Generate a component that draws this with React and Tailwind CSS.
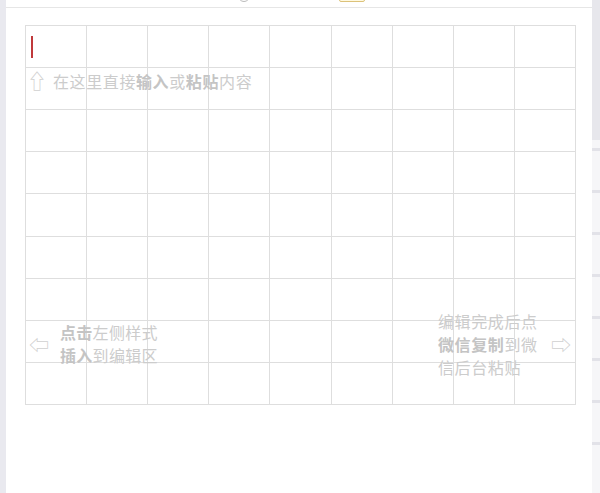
import React from 'react';

const font = { fontFamily: '"Noto Sans CJK SC", "Noto Sans", sans-serif' };

const Cell = () => <div className="border-r border-b border-[#dedede]" />;

const RightMarks = () => (
    <div className="flex flex-col">
        <div className="h-[140px] bg-[#e7e7ec]" />
        {[0, 1, 2, 3, 4, 5, 6, 7].map((i) => (
            <div key={i} className="h-[42px] flex flex-col justify-start pt-[8px]">
                <div className="h-[3px] bg-[#e2e2e8]" />
            </div>
        ))}
    </div>
);

const App = () => {
    const cells = Array.from({ length: 81 });

    return (
        <div className="flex h-[493px] w-[600px] overflow-hidden bg-[#f6f6f8]" style={font}>
            {/* left strip */}
            <div className="w-[6px] shrink-0 bg-[#e9e9ef]" />

            {/* editor panel */}
            <div className="flex flex-1 flex-col bg-white">
                {/* toolbar edge */}
                <div className="relative h-[8px] shrink-0 border-b border-[#e6e6e6] overflow-hidden">
                    <div className="absolute left-[232px] top-[-10px] h-[12px] w-[12px] rounded-full border border-[#bbbbbb]" />
                    <div className="absolute left-[333px] top-[-4px] h-[6px] w-[26px] rounded-[2px] border border-[#dcc27a] bg-[#fff9e0]" />
                </div>

                <div className="pl-[19px] pr-[16px] pt-[17px]">
                    <div className="relative grid h-[380px] grid-cols-9 grid-rows-9 border-t border-l border-[#dedede]">
                        {cells.map((_, i) => (
                            <Cell key={i} />
                        ))}

                        {/* caret */}
                        <div className="absolute left-[5px] top-[10px] h-[22px] w-[2px] bg-[#c0393b]" />

                        {/* top hint */}
                        <div className="absolute left-[1px] top-[43px] flex items-center gap-[6px] text-[16px] leading-[24px] text-[#cccccc]">
                            <span className="text-[20px] leading-[24px] text-[#d0d0d0]">⇧</span>
                            <span className="tracking-[0.6px]">
                                在这里直接<b className="font-bold text-[#c4c4c4]">输入</b>或<b className="font-bold text-[#c4c4c4]">粘贴</b>内容
                            </span>
                        </div>

                        {/* left hint */}
                        <div className="absolute left-[3px] top-[295px] flex items-center gap-[11px] text-[16px] leading-[23px] text-[#cccccc]">
                            <span className="text-[20px] text-[#d0d0d0]">⇦</span>
                            <div className="tracking-[0.3px]">
                                <div><b className="font-bold text-[#c4c4c4]">点击</b>左侧样式</div>
                                <div><b className="font-bold text-[#c4c4c4]">插入</b>到编辑区</div>
                            </div>
                        </div>

                        {/* right hint */}
                        <div className="absolute left-[412px] top-[284px] flex items-center gap-[11px] text-[16px] leading-[23px] text-[#cccccc]">
                            <div className="w-[102px] tracking-[0.6px]">
                                <div>编辑完成后点</div>
                                <div><b className="font-bold text-[#c4c4c4]">微信复制</b>到微</div>
                                <div>信后台粘贴</div>
                            </div>
                            <span className="text-[20px] text-[#d0d0d0]">⇨</span>
                        </div>
                    </div>
                </div>
            </div>

            {/* right strip */}
            <div className="w-[8px] shrink-0">
                <RightMarks />
            </div>
        </div>
    );
};

export default App;
